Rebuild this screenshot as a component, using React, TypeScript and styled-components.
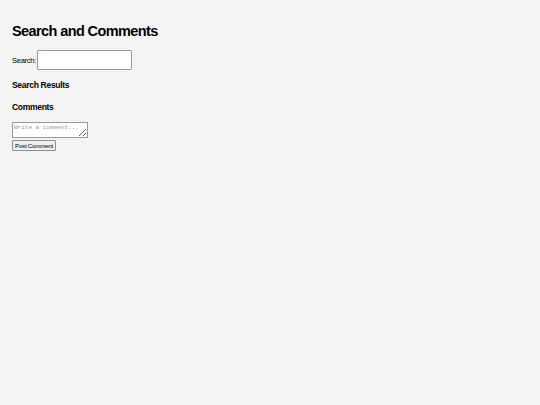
import React from "react";
import styled, { createGlobalStyle } from "styled-components";

const Global = createGlobalStyle`
  html, body { margin: 0; padding: 0; background: #f4f4f4; }
  body { font-family: "Liberation Sans", Arial, sans-serif; color: #000; }
`;

const Page = styled.div`
  padding: 23px 12px;
  display: flex;
  flex-direction: column;
  align-items: flex-start;
`;

const Title = styled.h1`
  margin: 0 0 10px;
  font-size: 14.5px;
  letter-spacing: -0.6px;
  font-weight: bold;
  line-height: 17px;
`;

const SearchRow = styled.div`
  display: flex;
  align-items: center;
  gap: 1px;
`;

const Label = styled.label`
  font-size: 7.5px;
  letter-spacing: -0.25px;
`;

const SearchInput = styled.input`
  box-sizing: border-box;
  width: 95px;
  height: 20px;
  margin: 0;
  border: 1px solid #9a9a9a;
  border-radius: 1px;
  background: #fff;
`;

const SectionTitle = styled.h2`
  margin: ${(p: { $top: number }) => p.$top}px 0 0;
  font-size: 8.5px;
  letter-spacing: -0.3px;
  font-weight: bold;
  line-height: 10px;
`;

const CommentBox = styled.textarea`
  box-sizing: border-box;
  width: 76px;
  height: 16px;
  margin: 10px 0 0;
  padding: 1px;
  border: 1px solid #9a9a9a;
  background: #fff;
  font-family: "Liberation Mono", monospace;
  font-size: 6px;
  resize: both;
  &::placeholder { color: #9a9a9a; }
`;

const PostButton = styled.button`
  box-sizing: border-box;
  margin: 2px 0 0;
  height: 11px;
  padding: 0 2px;
  font-family: "Liberation Sans", Arial, sans-serif;
  font-size: 6.2px;
  letter-spacing: -0.25px;
  line-height: 9px;
  background: #efefef;
  border: 1px solid #8f8f8f;
  border-radius: 1px;
  color: #000;
`;

export default function App() {
  return (
    <>
      <Global />
      <Page>
        <Title>Search and Comments</Title>
        <SearchRow>
          <Label htmlFor="s">Search:</Label>
          <SearchInput id="s" type="text" />
        </SearchRow>
        <SectionTitle $top={10}>Search Results</SectionTitle>
        <SectionTitle $top={12}>Comments</SectionTitle>
        <CommentBox placeholder="Write a comment..." />
        <PostButton>Post Comment</PostButton>
      </Page>
    </>
  );
}
